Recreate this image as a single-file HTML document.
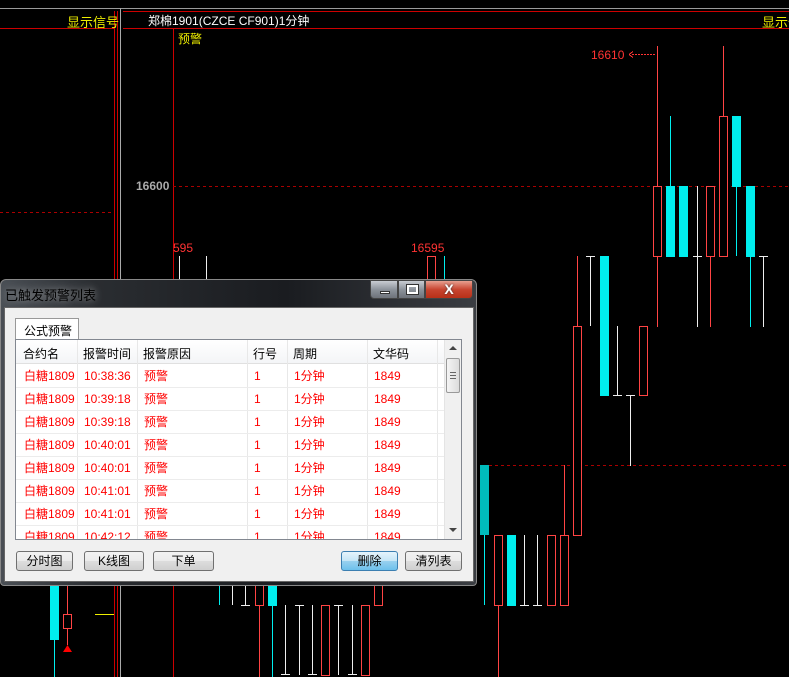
<!DOCTYPE html>
<html><head><meta charset="utf-8"><style>
*{margin:0;padding:0;box-sizing:border-box}
body{width:789px;height:677px;background:#000;position:relative;overflow:hidden;font-family:"Liberation Sans","WenQuanYi Zen Hei","Noto Sans CJK SC",sans-serif;font-size:12px}
.a{position:absolute;white-space:nowrap}
svg{position:absolute;left:0;top:0}
.dlg{position:absolute;left:0;top:279px;width:477px;height:307px;border-radius:6px 6px 4px 4px;background:linear-gradient(90deg,#4a4f55 0,#2a2d31 20%,#1a1c20 60%,#3a3d42 100%);border:1px solid #888}
.client{position:absolute;left:3px;top:27px;width:470px;height:275px;background:#f0f0f0;border:1px solid #666}
.tab{position:absolute;left:10px;top:10px;width:64px;height:22px;background:#fff;border:1px solid #999;border-bottom:none;padding:3px 0 0 8px;font-size:12px;color:#000;white-space:nowrap}
.list{position:absolute;left:10px;top:31px;width:447px;height:201px;background:#fff;border:1px solid #828790;overflow:hidden}
.hdr{position:absolute;left:0;top:0;width:428px;height:24px;background:linear-gradient(#fff,#f4f5f7);border-bottom:1px solid #e0e0e0}
.c{position:absolute;font-size:12px;white-space:nowrap}
.vl{position:absolute;top:0;width:1px;height:201px;background:#e8e8e8}
.hl{position:absolute;left:0;width:428px;height:1px;background:#ececec}
.sb{position:absolute;left:428px;top:0;width:17px;height:199px;background:#f0f0f0;border-left:1px solid #e4e4e4}
.btn{position:absolute;top:243px;height:20px;border:1px solid #707070;border-radius:3px;background:linear-gradient(#f2f2f2,#ebebeb 50%,#dddddd 51%,#cfcfcf);text-align:center;font-size:12px;line-height:18px;color:#000;white-space:nowrap}
.row{position:absolute;left:0;width:428px;height:23px;line-height:23px;color:#f00}
</style></head><body>
<svg width="789" height="677">
<g shape-rendering="crispEdges">
<line x1="0" y1="8.5" x2="789" y2="8.5" stroke="#9a9a9a"/>
<line x1="123" y1="11.5" x2="789" y2="11.5" stroke="#c00"/>
<line x1="0" y1="28.5" x2="114" y2="28.5" stroke="#c00"/>
<line x1="123" y1="28.5" x2="789" y2="28.5" stroke="#c00"/>
<line x1="114.5" y1="11" x2="114.5" y2="677" stroke="#c00"/>
<line x1="117.5" y1="11" x2="117.5" y2="677" stroke="#c00"/>
<line x1="120.5" y1="8" x2="120.5" y2="677" stroke="#aaa"/>
<line x1="173.5" y1="28" x2="173.5" y2="677" stroke="#c00"/>
<line x1="173" y1="186.5" x2="789" y2="186.5" stroke="#a00" stroke-dasharray="3,3"/>
<line x1="0" y1="212.5" x2="113" y2="212.5" stroke="#a00" stroke-dasharray="3,3"/>
<line x1="489" y1="465.5" x2="789" y2="465.5" stroke="#a00" stroke-dasharray="3,3"/>
<line x1="632" y1="54.5" x2="656" y2="54.5" stroke="#f33" stroke-dasharray="2,1"/>
<path d="M629 54.5l4-3M629 54.5l4 3" stroke="#f33" fill="none"/>
</g>
<g stroke-width="1.3" fill="none" shape-rendering="crispEdges">
<line x1="657.5" y1="46" x2="657.5" y2="327" stroke="#f44"/>
<rect x="653.5" y="186.5" width="8" height="70" stroke="#f44" fill="#000"/>
<line x1="670.5" y1="116" x2="670.5" y2="186" stroke="#0ee"/>
<rect x="666" y="186" width="9" height="71" fill="#0ee" stroke="none"/>
<rect x="679" y="186" width="9" height="71" fill="#0ee" stroke="none"/>
<line x1="697.5" y1="186" x2="697.5" y2="327" stroke="#eee"/>
<line x1="693" y1="256.5" x2="702" y2="256.5" stroke="#eee"/>
<line x1="710.5" y1="256" x2="710.5" y2="327" stroke="#f44"/>
<rect x="706.5" y="186.5" width="8" height="70" stroke="#f44" fill="#000"/>
<line x1="723.5" y1="46" x2="723.5" y2="116" stroke="#f44"/>
<rect x="719.5" y="116.5" width="8" height="140" stroke="#f44" fill="#000"/>
<line x1="736.5" y1="186" x2="736.5" y2="256" stroke="#0ee"/>
<rect x="732" y="116" width="9" height="71" fill="#0ee" stroke="none"/>
<line x1="750.5" y1="256" x2="750.5" y2="327" stroke="#0ee"/>
<rect x="746" y="186" width="9" height="71" fill="#0ee" stroke="none"/>
<line x1="763.5" y1="256" x2="763.5" y2="327" stroke="#eee"/>
<line x1="759" y1="256.5" x2="768" y2="256.5" stroke="#eee"/>
<line x1="577.5" y1="256" x2="577.5" y2="326" stroke="#f44"/>
<rect x="573.5" y="326.5" width="8" height="209" stroke="#f44" fill="#000"/>
<line x1="590.5" y1="256" x2="590.5" y2="326" stroke="#eee"/>
<line x1="586" y1="256.5" x2="595" y2="256.5" stroke="#eee"/>
<rect x="600" y="256" width="9" height="140" fill="#0ee" stroke="none"/>
<line x1="617.5" y1="326" x2="617.5" y2="396" stroke="#eee"/>
<line x1="613" y1="395.5" x2="622" y2="395.5" stroke="#eee"/>
<line x1="630.5" y1="396" x2="630.5" y2="466" stroke="#eee"/>
<line x1="626" y1="395.5" x2="635" y2="395.5" stroke="#eee"/>
<rect x="639.5" y="326.5" width="8" height="69" stroke="#f44" fill="#000"/>
<line x1="564.5" y1="465" x2="564.5" y2="535" stroke="#f44"/>
<rect x="480" y="465" width="9" height="70" fill="#0bb" stroke="none"/>
<line x1="484.5" y1="535" x2="484.5" y2="605" stroke="#0ee"/>
<rect x="494.5" y="535.5" width="8" height="70" stroke="#f44"/>
<line x1="498.5" y1="605" x2="498.5" y2="677" stroke="#f44"/>
<rect x="507" y="535" width="9" height="71" fill="#0ee" stroke="none"/>
<line x1="524.5" y1="535" x2="524.5" y2="605" stroke="#eee"/>
<line x1="520" y1="605.5" x2="529" y2="605.5" stroke="#eee"/>
<line x1="537.5" y1="535" x2="537.5" y2="605" stroke="#eee"/>
<line x1="533" y1="605.5" x2="542" y2="605.5" stroke="#eee"/>
<rect x="547.5" y="535.5" width="8" height="70" stroke="#f44"/>
<rect x="560.5" y="535.5" width="8" height="70" stroke="#f44"/>
<line x1="179.5" y1="256" x2="179.5" y2="280" stroke="#eee"/>
<line x1="206.5" y1="256" x2="206.5" y2="280" stroke="#eee"/>
<path d="M427.5 280V256.5h8V280" stroke="#f44"/>
<line x1="444.5" y1="256" x2="444.5" y2="280" stroke="#0ee"/>
<rect x="50" y="586" width="9" height="54" fill="#0ee" stroke="none"/>
<line x1="54.5" y1="640" x2="54.5" y2="677" stroke="#0ee"/>
<line x1="67.5" y1="586" x2="67.5" y2="645" stroke="#f44"/>
<rect x="63.5" y="614.5" width="8" height="14" stroke="#f44" fill="#000"/>
<line x1="95" y1="614.5" x2="114" y2="614.5" stroke="#ee0"/>
<line x1="219.5" y1="586" x2="219.5" y2="605" stroke="#0ee"/>
<line x1="232.5" y1="586" x2="232.5" y2="605" stroke="#eee"/>
<line x1="245.5" y1="586" x2="245.5" y2="605" stroke="#eee"/>
<line x1="241" y1="605.5" x2="250" y2="605.5" stroke="#eee"/>
<path d="M255.5 586V605.5h8V586" stroke="#f44"/>
<line x1="259.5" y1="605" x2="259.5" y2="677" stroke="#f44"/>
<rect x="268" y="586" width="9" height="20" fill="#0ee" stroke="none"/>
<line x1="272.5" y1="605" x2="272.5" y2="677" stroke="#0ee"/>
<line x1="285.5" y1="605" x2="285.5" y2="675" stroke="#eee"/><line x1="281" y1="674.5" x2="290" y2="674.5" stroke="#eee"/>
<line x1="299.5" y1="605" x2="299.5" y2="675" stroke="#eee"/><line x1="295" y1="605.5" x2="304" y2="605.5" stroke="#eee"/>
<line x1="312.5" y1="605" x2="312.5" y2="675" stroke="#eee"/><line x1="308" y1="674.5" x2="317" y2="674.5" stroke="#eee"/>
<rect x="321.5" y="605.5" width="8" height="70" stroke="#f44"/>
<line x1="338.5" y1="605" x2="338.5" y2="675" stroke="#eee"/><line x1="334" y1="605.5" x2="343" y2="605.5" stroke="#eee"/>
<line x1="352.5" y1="605" x2="352.5" y2="675" stroke="#eee"/><line x1="348" y1="674.5" x2="357" y2="674.5" stroke="#eee"/>
<rect x="361.5" y="605.5" width="8" height="70" stroke="#f44"/>
<path d="M374.5 586V605.5h8V586" stroke="#f44"/>
</g>
<path d="M67.5 645L63 652h9z" fill="#f00"/>
</svg>
<div class="a" style="left:67px;top:12px;color:#ee0;font-size:13px">显示信号</div>
<div class="a" style="left:148px;top:12px;color:#fff;font-size:12px">郑棉1901(CZCE CF901)1分钟</div>
<div class="a" style="left:762px;top:12px;color:#ee0;font-size:13px">显示信</div>
<div class="a" style="left:178px;top:30px;color:#ee0;font-size:12px">预警</div>
<div class="a" style="left:136px;top:179px;color:#aaa;font-size:12px;font-weight:bold">16600</div>
<div class="a" style="left:173px;top:241px;color:#f33;font-size:12px">595</div>
<div class="a" style="left:411px;top:241px;color:#f33;font-size:12px">16595</div>
<div class="a" style="left:591px;top:48px;color:#f33;font-size:12px">16610</div>

<div class="dlg">
 <div class="a" style="left:4px;top:5px;color:#000;font-size:13px;text-shadow:0 0 8px rgba(220,220,220,.7)">已触发预警列表</div>
 <div class="a" style="left:369px;top:0;width:28px;height:19px;border:1px solid #444;border-radius:0 0 0 4px;background:linear-gradient(#c8ccd2,#8d939b 50%,#6e737a)"><div style="position:absolute;left:9px;top:10px;width:10px;height:3px;background:#fff;border:1px solid #333"></div></div>
 <div class="a" style="left:397px;top:0;width:27px;height:19px;border:1px solid #444;background:linear-gradient(#c8ccd2,#8d939b 50%,#6e737a)"><div style="position:absolute;left:8px;top:4px;width:11px;height:9px;border:2px solid #fff;outline:1px solid #333"></div></div>
 <div class="a" style="left:424px;top:0;width:48px;height:19px;border:1px solid #444;border-radius:0 0 4px 0;background:linear-gradient(#e8a090,#c84530 50%,#b83018);color:#fff;font-weight:bold;font-size:14px;text-align:center;line-height:17px;text-shadow:0 0 2px #333">X</div>
 <div class="client">
  <div class="tab">公式预警</div>
  <div class="list">
   <div class="hdr"></div>
   <div class="vl" style="left:61px"></div><div class="vl" style="left:121px"></div><div class="vl" style="left:231px"></div><div class="vl" style="left:271px"></div><div class="vl" style="left:351px"></div><div class="vl" style="left:421px"></div>
   <div class="c" style="left:7px;top:5px">合约名</div><div class="c" style="left:67px;top:5px">报警时间</div><div class="c" style="left:127px;top:5px">报警原因</div><div class="c" style="left:237px;top:5px">行号</div><div class="c" style="left:277px;top:5px">周期</div><div class="c" style="left:357px;top:5px">文华码</div>
   <div class="hl" style="top:47px"></div><div class="hl" style="top:70px"></div><div class="hl" style="top:93px"></div><div class="hl" style="top:116px"></div><div class="hl" style="top:139px"></div><div class="hl" style="top:162px"></div><div class="hl" style="top:185px"></div>
   <div class="row" style="top:25px"><span class="c" style="left:8px">白糖1809</span><span class="c" style="left:68px">10:38:36</span><span class="c" style="left:128px">预警</span><span class="c" style="left:238px">1</span><span class="c" style="left:278px">1分钟</span><span class="c" style="left:358px">1849</span></div>
   <div class="row" style="top:48px"><span class="c" style="left:8px">白糖1809</span><span class="c" style="left:68px">10:39:18</span><span class="c" style="left:128px">预警</span><span class="c" style="left:238px">1</span><span class="c" style="left:278px">1分钟</span><span class="c" style="left:358px">1849</span></div>
   <div class="row" style="top:71px"><span class="c" style="left:8px">白糖1809</span><span class="c" style="left:68px">10:39:18</span><span class="c" style="left:128px">预警</span><span class="c" style="left:238px">1</span><span class="c" style="left:278px">1分钟</span><span class="c" style="left:358px">1849</span></div>
   <div class="row" style="top:94px"><span class="c" style="left:8px">白糖1809</span><span class="c" style="left:68px">10:40:01</span><span class="c" style="left:128px">预警</span><span class="c" style="left:238px">1</span><span class="c" style="left:278px">1分钟</span><span class="c" style="left:358px">1849</span></div>
   <div class="row" style="top:117px"><span class="c" style="left:8px">白糖1809</span><span class="c" style="left:68px">10:40:01</span><span class="c" style="left:128px">预警</span><span class="c" style="left:238px">1</span><span class="c" style="left:278px">1分钟</span><span class="c" style="left:358px">1849</span></div>
   <div class="row" style="top:140px"><span class="c" style="left:8px">白糖1809</span><span class="c" style="left:68px">10:41:01</span><span class="c" style="left:128px">预警</span><span class="c" style="left:238px">1</span><span class="c" style="left:278px">1分钟</span><span class="c" style="left:358px">1849</span></div>
   <div class="row" style="top:163px"><span class="c" style="left:8px">白糖1809</span><span class="c" style="left:68px">10:41:01</span><span class="c" style="left:128px">预警</span><span class="c" style="left:238px">1</span><span class="c" style="left:278px">1分钟</span><span class="c" style="left:358px">1849</span></div>
   <div class="row" style="top:186px"><span class="c" style="left:8px">白糖1809</span><span class="c" style="left:68px">10:42:12</span><span class="c" style="left:128px">预警</span><span class="c" style="left:238px">1</span><span class="c" style="left:278px">1分钟</span><span class="c" style="left:358px">1849</span></div>
   <div class="sb">
    <div style="position:absolute;left:4px;top:6px;border:4px solid transparent;border-bottom:4px solid #444;border-top:none;width:0;height:0"></div>
    <div style="position:absolute;left:1px;top:18px;width:14px;height:35px;border:1px solid #999;border-radius:2px;background:linear-gradient(90deg,#f4f4f4,#dcdcdc)"><div style="position:absolute;left:3px;top:13px;width:6px;height:7px;border-top:1px solid #666;border-bottom:1px solid #666"><div style="margin-top:2px;height:1px;background:#666"></div></div></div>
    <div style="position:absolute;left:4px;top:188px;border:4px solid transparent;border-top:4px solid #444;border-bottom:none;width:0;height:0"></div>
   </div>
  </div>
  <div class="btn" style="left:11px;width:57px">分时图</div>
  <div class="btn" style="left:79px;width:60px">K线图</div>
  <div class="btn" style="left:148px;width:61px">下单</div>
  <div class="btn" style="left:336px;width:57px;border-color:#3c7fb1;background:linear-gradient(#e5f4fc,#c4e5f6 50%,#98d1ef 51%,#6dc0ec)">删除</div>
  <div class="btn" style="left:400px;width:57px">清列表</div>
 </div>
</div>
</body></html>
